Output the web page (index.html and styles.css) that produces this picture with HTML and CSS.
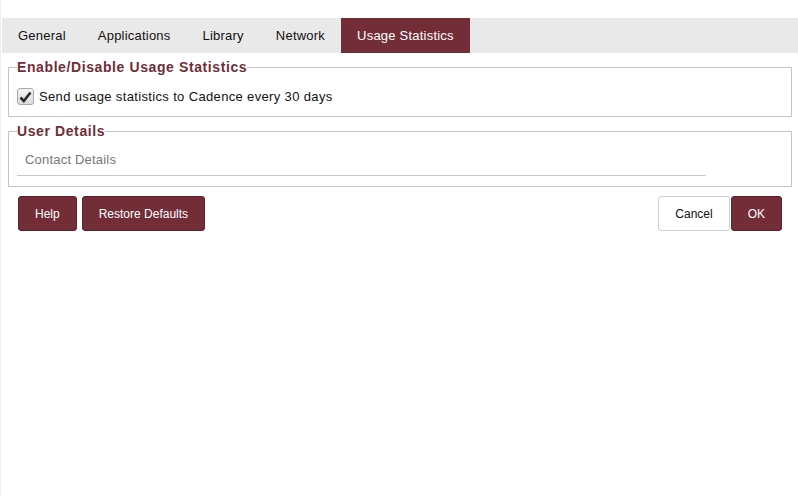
FILE: index.html
```html
<!DOCTYPE html>
<html>
<head>
<meta charset="utf-8">
<link rel="stylesheet" href="styles.css">
</head>
<body>
<div class="page">
  <nav class="tabs">
    <div class="tab">General</div>
    <div class="tab">Applications</div>
    <div class="tab">Library</div>
    <div class="tab">Network</div>
    <div class="tab active">Usage Statistics</div>
  </nav>
  <div class="content">
    <fieldset class="group">
      <legend>Enable/Disable Usage Statistics</legend>
      <label class="check">
        <span class="box"><svg width="13" height="12" viewBox="0 0 13 12"><path d="M1.5 6.5 L4.8 10 L11.5 1.5" fill="none" stroke="#2b2b2b" stroke-width="2.6" stroke-linejoin="miter"/></svg></span>
        <span class="check-label">Send usage statistics to Cadence every 30 days</span>
      </label>
    </fieldset>
    <fieldset class="group group2">
      <legend>User Details</legend>
      <div class="field"><span class="placeholder">Contact Details</span></div>
    </fieldset>
    <div class="actions">
      <div class="left">
        <button class="btn primary">Help</button>
        <button class="btn primary">Restore Defaults</button>
      </div>
      <div class="right">
        <button class="btn secondary">Cancel</button>
        <button class="btn primary">OK</button>
      </div>
    </div>
  </div>
</div>
</body>
</html>
```

FILE: styles.css
```css
html, body {
  margin: 0;
  padding: 0;
  background: #fff;
}
body {
  font-family: "Liberation Sans", Arial, sans-serif;
  font-size: 13px;
  color: #111;
}
.page {
  height: 496px;
  border-left: 1px solid #f0f0f0;
  box-sizing: border-box;
  padding: 18px 0 0 1px;
}
.tabs {
  display: flex;
  background: #e9e9e9;
  height: 35px;
}
.tab {
  padding: 0 16px;
  line-height: 35px;
  font-size: 13px;
  letter-spacing: 0.22px;
  color: #111;
}
.tab.active {
  background: #722d37;
  color: #fff;
}
.content {
  padding: 6px 6px 0 6px;
}
.group {
  margin: 0 0 6px 0;
  border: 1px solid #c4c4c4;
  padding: 0 8px 0 8px;
  height: 58px;
  box-sizing: border-box;
}
.group legend {
  padding: 0;
  font-weight: bold;
  font-size: 14px;
  letter-spacing: 0.6px;
  color: #722d37;
  line-height: 16px;
}
.check {
  display: flex;
  align-items: center;
  gap: 5px;
  margin-top: 13px;
}
.box {
  width: 15px;
  height: 15px;
  border: 1px solid #aaa;
  border-radius: 3px;
  background: linear-gradient(#f4f4f4, #dadada);
  display: flex;
  align-items: center;
  justify-content: center;
}
.check-label {
  letter-spacing: 0.35px;
}
.group2 {
  height: 64px;
  margin-bottom: 0;
}
.field {
  width: 689px;
  margin-top: 6px;
  border-bottom: 1px solid #c8c8c8;
  height: 31px;
  box-sizing: border-box;
  padding: 5px 8px 0;
  line-height: 20px;
}
.placeholder {
  color: #777;
  letter-spacing: 0.2px;
}
.actions {
  display: flex;
  justify-content: space-between;
  padding: 9px 10px 0 10px;
}
.left, .right {
  display: flex;
  gap: 5px;
}
.right {
  gap: 1px;
}
.btn {
  font-family: "Liberation Sans", Arial, sans-serif;
  font-size: 12px;
  height: 35px;
  padding: 0 16px;
  border-radius: 3px;
  cursor: pointer;
}
.btn.primary {
  background: #722d37;
  color: #fff;
  border: 1px solid #5e2029;
}
.btn.secondary {
  background: #fff;
  color: #111;
  border: 1px solid #cfcfcf;
}
```
